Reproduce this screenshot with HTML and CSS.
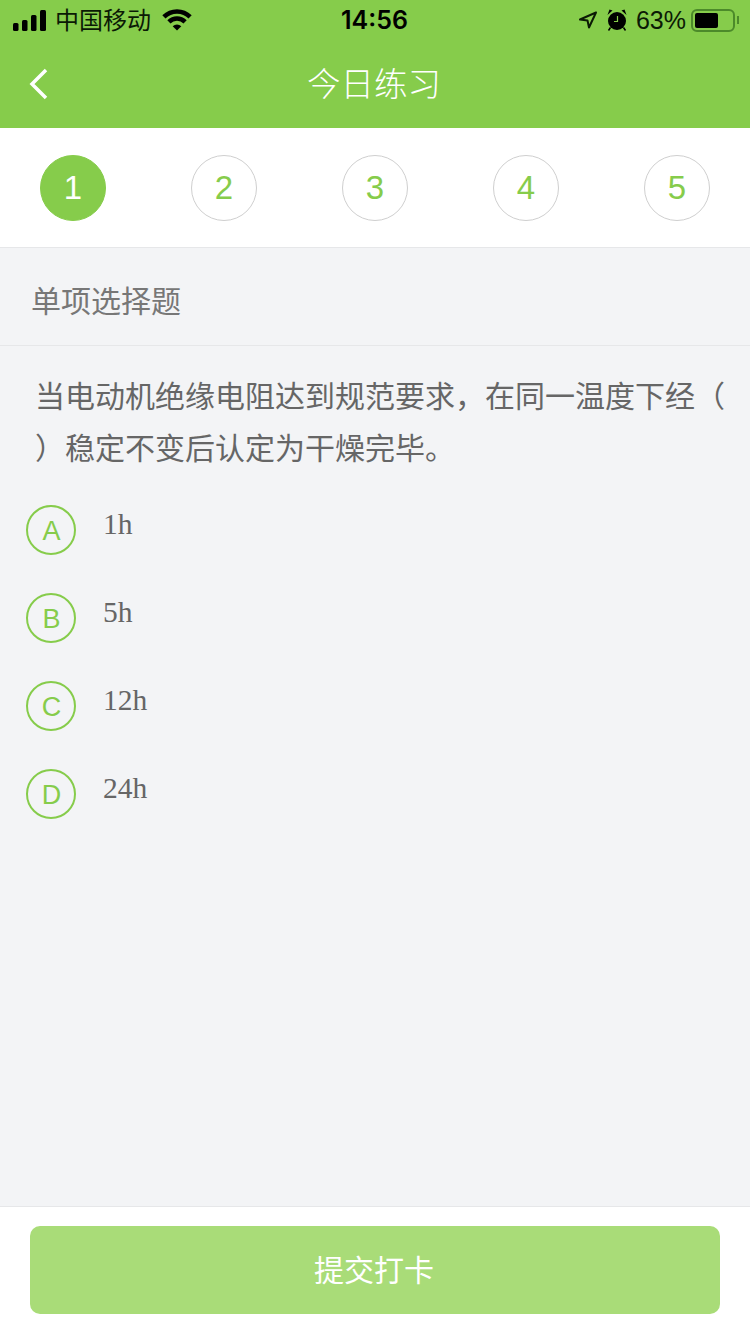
FILE: index.html
```html
<!DOCTYPE html>
<html>
<head>
<title>今日练习</title>
<link rel="stylesheet" href="styles.css">
</head>
<body>
<div class="page">
  <div class="top">
    <div class="status">
      <div class="status-left">
        <svg class="signal" width="33" height="21" viewBox="0 0 33 21"><rect x="0" y="13" width="5.500" height="8" rx="1.500"/><rect x="9" y="10" width="5.500" height="11" rx="1.500"/><rect x="18" y="5" width="5.500" height="16" rx="1.500"/><rect x="27" y="0" width="6" height="21" rx="1.500"/></svg>
        <span class="carrier">中国移动</span>
        <svg class="wifi" width="30" height="22" viewBox="0 0 30 22"><path d="M1.900 7.900a18.500 18.500 0 0 1 26.200 0M6.900 12.900a11.500 11.500 0 0 1 16.200 0" fill="none" stroke="#000" stroke-width="4.500"/><path d="M15 21.500 10.700 17.200a6 6 0 0 1 8.600 0z"/></svg>
      </div>
      <div class="clock">14:56</div>
      <div class="status-right">
        <svg class="arrow" width="20" height="18" viewBox="0 0 20 18"><path d="M18 1.500 2 8.500l7.500 1 1.500 7z" fill="none" stroke="#0b1a05" stroke-width="2" stroke-linejoin="round"/></svg>
        <svg class="alarm" width="20" height="22" viewBox="0 0 20 22"><circle cx="10" cy="12" r="9"/><path d="M.500 6 5.500 1.500 2.500.500zM19.500 6 14.500 1.500 17.500.500z"/><path d="M3.500 18.500l-2 3M16.500 18.500l2 3" stroke="#000" stroke-width="1.500"/><path d="M10.500 7v5.500h-3.500" fill="none" stroke="#86cc4b" stroke-width="1.200"/></svg>
        <span class="percent">63%</span>
        <div class="battery"><div class="battery-fill"></div></div>
        <div class="battery-cap"></div>
      </div>
    </div>
    <div class="navbar">
      <svg class="back" width="20" height="32" viewBox="0 0 20 32"><path d="M17 2 3 16l14 14" fill="none" stroke="#fff" stroke-width="3.500"/></svg>
      <div class="nav-title">今日练习</div>
    </div>
  </div>

  <div class="steps">
    <div class="step active">1</div>
    <div class="step">2</div>
    <div class="step">3</div>
    <div class="step">4</div>
    <div class="step">5</div>
  </div>

  <div class="qtype">单项选择题</div>

  <div class="question">当电动机绝缘电阻达到规范要求，在同一温度下经（ ）稳定不变后认定为干燥完毕。</div>

  <ul class="options">
    <li class="option"><span class="letter">A</span><span class="answer">1h</span></li>
    <li class="option"><span class="letter">B</span><span class="answer">5h</span></li>
    <li class="option"><span class="letter">C</span><span class="answer">12h</span></li>
    <li class="option"><span class="letter">D</span><span class="answer">24h</span></li>
  </ul>

  <div class="footer">
    <button class="submit">提交打卡</button>
  </div>
</div>
</body>
</html>
```

FILE: styles.css
```css
* {box-sizing: border-box;}
html, body {margin: 0; padding: 0;}
body {background: #f3f4f6; font-family: "Liberation Sans", "Noto Sans CJK SC", sans-serif;}
.page {width: 750px; height: 1334px; display: flex; flex-direction: column; overflow: hidden;}

.top {background: #86cc4b; height: 128px; flex: none;}
.status {height: 40px; padding: 0 11px 0 13px; display: flex; align-items: center; justify-content: space-between; position: relative; color: #0b1a05;}
.status-left {display: flex; align-items: center;}
.signal {fill: #000; margin-right: 9px;}
.carrier {font-size: 24px; margin-right: 11px; padding-bottom: 3px;}
.wifi {fill: #000;}
.clock {font-family: Inter, sans-serif; font-size: 25px; font-weight: 600; position: absolute; left: 341px; top: 5px; color: #000;}
.status-right {display: flex; align-items: center;}
.arrow {margin-right: 9px;}
.alarm {fill: #000; margin-right: 9px;}
.percent {font-size: 25px; margin-right: 5px;}
.battery {width: 44px; height: 23px; border: 2px solid #4c8a2a; border-radius: 6px; padding: 2px;}
.battery-fill {width: 23px; height: 15px; background: #000; border-radius: 2px;}
.battery-cap {width: 2px; height: 8px; background: #4c8a2a; margin-left: 2px;}

.navbar {height: 88px; display: flex; align-items: center; justify-content: center; position: relative;}
.back {position: absolute; left: 29px; top: 28px;}
.nav-title {color: #fff; font-size: 33.500px; font-weight: 300; padding: 0 2px 5px 0;}

.steps {height: 120px; background: #fff; border-bottom: 1px solid #e6e7e9; padding: 0 40px; display: flex; align-items: center; justify-content: space-between; flex: none;}
.step {width: 66px; height: 66px; border: 1px solid #cfcfcf; border-radius: 50%; color: #86cc4b; font-size: 33px; display: flex; align-items: center; justify-content: center;}
.step.active {background: #86cc4b; border-color: #86cc4b; color: #fff;}

.qtype {height: 98px; padding: 0 31px; border-bottom: 1px solid #e6e7e9; color: #777; font-size: 30px; line-height: 108px; flex: none;}

.question {padding: 25px 20px 0 35px; font-size: 30px; line-height: 52px; color: #666; height: 159px; flex: none;}

.options {list-style: none; margin: 0; padding: 0 0 0 26px; flex: 1;}
.option {height: 88px; display: flex; align-items: flex-start;}
.letter {width: 50px; height: 50px; border: 2px solid #86cc4b; border-radius: 50%; color: #86cc4b; font-size: 27px; display: flex; align-items: center; justify-content: center; flex: none; padding: 3px 0 0 1px;}
.answer {font-family: "Liberation Serif", serif; font-size: 29.500px; color: #666; margin-left: 27px; line-height: 34px; margin-top: 2px;}

.footer {height: 128px; background: #fff; border-top: 1px solid #e6e7e9; padding: 19px 30px 0; flex: none;}
.submit {display: block; width: 690px; height: 88px; border: 0; border-radius: 10px; background: #a9dc78; color: #fff; font-family: inherit; font-size: 30px; padding: 0 2px 4px 0;}
```
